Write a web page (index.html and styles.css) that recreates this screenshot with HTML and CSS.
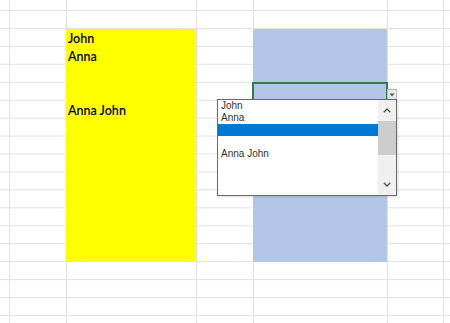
FILE: index.html
```html
<!DOCTYPE html>
<html lang="en">
<head>
  <meta charset="UTF-8">
  <meta name="viewport" content="width=device-width, initial-scale=1.0">
  <title>Dropdown list in sheet</title>
  <link rel="stylesheet" href="styles.css">
</head>
<body>
  <div class="sheet">
    <div class="fill yellow">
      <div class="cell">John</div>
      <div class="cell">Anna</div>
      <div class="cell"></div>
      <div class="cell"></div>
      <div class="cell">Anna John</div>
    </div>
    <div class="fill blue"></div>

    <!-- active cell + its dropdown -->
    <div class="active-cell"></div>
    <div class="drop-btn">
      <svg width="6" height="4" viewBox="0 0 6 4"><path d="M0.5 0.5 L5.5 0.5 L3 3.5 Z" fill="#555"/></svg>
    </div>
    <div class="listbox">
      <ul class="items">
        <li>John</li>
        <li>Anna</li>
        <li class="selected"></li>
        <li></li>
        <li>Anna John</li>
      </ul>
      <div class="scrollbar">
        <span class="arrow">
          <svg width="8" height="5" viewBox="0 0 8 5"><polyline points="0.8,4.2 4,1 7.2,4.2" fill="none" stroke="#505050" stroke-width="1.3"/></svg>
        </span>
        <span class="thumb"></span>
        <span class="track"></span>
        <span class="arrow">
          <svg width="8" height="5" viewBox="0 0 8 5"><polyline points="0.8,0.8 4,4 7.2,0.8" fill="none" stroke="#505050" stroke-width="1.3"/></svg>
        </span>
      </div>
    </div>
  </div>
</body>
</html>
```

FILE: styles.css
```css
body {
  margin: 0;
  font-family: Lato, "Liberation Sans", sans-serif;
  background: #fff;
}
.sheet {
  position: relative;
  width: 450px;
  height: 323px;
  overflow: hidden;
  display: grid;
  grid-template-columns: 66px 130px 57px 134px 1fr;
  grid-template-rows: 29px 233px 1fr;
  background-color: #fff;
  background-image:
    linear-gradient(to right,
      transparent 9px, #e2e2e2 9px 10px,
      transparent 10px 66px, #e2e2e2 66px 67px,
      transparent 67px 196px, #e2e2e2 196px 197px,
      transparent 197px 253px, #e2e2e2 253px 254px,
      transparent 254px 387px, #e2e2e2 387px 388px,
      transparent 388px 443px, #e2e2e2 443px 444px,
      transparent 444px),
    linear-gradient(to bottom, #e2e2e2 0 1px, transparent 1px);
  background-size: 100% 100%, 100% 17.95px;
  background-position: 0 0, 0 10px;
  background-repeat: no-repeat, repeat-y;
}
.fill {
  grid-row: 2;
}
.yellow {
  grid-column: 2;
  background: #ffff00;
}
.blue {
  grid-column: 4;
  background: #b4c6e7;
}
.cell {
  height: 18px;
  display: flex;
  align-items: flex-end;
  padding: 0 2px 2px;
  box-sizing: border-box;
  font-size: 12.5px;
  font-weight: 600;
  line-height: 1;
  color: #000;
}
.active-cell {
  position: absolute;
  left: 252px;
  top: 82px;
  width: 136px;
  height: 20px;
  box-sizing: border-box;
  border: 2px solid #2f7d4f;
}
.drop-btn {
  position: absolute;
  left: 387px;
  top: 89px;
  width: 10px;
  height: 11px;
  box-sizing: border-box;
  border: 1px solid #b8b8b8;
  background: #e9e9e9;
  display: flex;
  align-items: center;
  justify-content: center;
}
.listbox {
  position: absolute;
  left: 217px;
  top: 99px;
  width: 180px;
  height: 97px;
  box-sizing: border-box;
  border: 1px solid #6a6a6a;
  background: #fff;
  display: flex;
  box-shadow: 1px 1px 2px rgba(0, 0, 0, 0.15);
}
.items {
  flex: 1;
  margin: 0;
  padding: 0;
  list-style: none;
  font-family: "Liberation Sans", Arial, sans-serif;
  font-size: 10px;
  color: #333;
}
.items li {
  height: 12px;
  line-height: 12px;
  padding-left: 3px;
}
.items .selected {
  background: #0078d7;
}
.scrollbar {
  width: 18px;
  background: #f0f0f0;
  display: flex;
  flex-direction: column;
}
.arrow {
  height: 21px;
  display: flex;
  align-items: center;
  justify-content: center;
}
.thumb {
  height: 34px;
  background: #cdcdcd;
}
.track {
  flex: 1;
}
```
